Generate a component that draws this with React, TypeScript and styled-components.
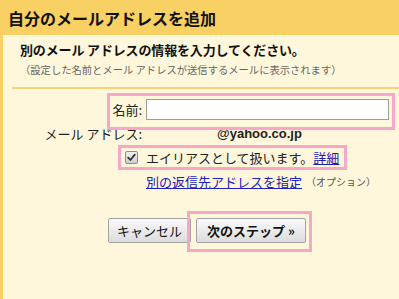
import * as React from "react";
import styled, { createGlobalStyle } from "styled-components";

const GlobalStyle = createGlobalStyle`
  html, body {
    margin: 0;
    padding: 0;
    background: #fff7dc;
  }
  body {
    font-family: "Noto Sans CJK JP", "Liberation Sans", sans-serif;
    color: #222;
  }
`;

interface THighlight {
  left: number;
  top: number;
  width: number;
  height: number;
}

const highlights: THighlight[] = [
  { left: 107, top: 93, width: 288, height: 37 },
  { left: 118, top: 145, width: 229, height: 25 },
  { left: 187, top: 211, width: 125, height: 41 },
];

const CheckMark = () => (
  <svg width="9" height="9" viewBox="0 0 9 9">
    <path d="M1.2 4.6 L3.4 7 L7.8 1.6" fill="none" stroke="#333" strokeWidth="1.8" strokeLinecap="round" strokeLinejoin="round" />
  </svg>
);

const App: React.FunctionComponent = () => {
  return (
    <Page>
      <GlobalStyle />
      <Header>自分のメールアドレスを追加</Header>
      <Body>
        <Intro>
          <Subtitle>別のメール アドレスの情報を入力してください。</Subtitle>
          <Note>（設定した名前とメール アドレスが送信するメールに表示されます）</Note>
        </Intro>
        <Divider />
        <Form>
          <Label>名前:</Label>
          <Value>
            <TextInput />
          </Value>
          <Label>メール アドレス:</Label>
          <Value>
            <Address>@yahoo.co.jp</Address>
          </Value>
          <Label>
            <FakeCheckbox>
              <CheckMark />
            </FakeCheckbox>
          </Label>
          <Value>
            エイリアスとして扱います。<Link>詳細</Link>
          </Value>
          <Label />
          <Value>
            <Link>別の返信先アドレスを指定</Link>
            <Small>（オプション）</Small>
          </Value>
        </Form>
        <Buttons>
          <Button>キャンセル</Button>
          <Button primary>次のステップ »</Button>
        </Buttons>
      </Body>
      {highlights.map((h, i) => (
        <Highlight key={i} style={{ left: h.left, top: h.top, width: h.width, height: h.height }} />
      ))}
    </Page>
  );
};

const Page = styled.div`
  position: relative;
  width: 399px;
  height: 299px;
  overflow: hidden;
  background: #fff7dc;
`;

const Header = styled.div`
  height: 35px;
  display: flex;
  align-items: center;
  padding-left: 8px;
  background: #f9d064;
  font-size: 16px;
  font-weight: bold;
  color: #111;
`;

const Body = styled.div`
  border-left: 3px solid #f9d064;
  padding: 7px 0 0 9px;
  height: 257px;
`;

const Intro = styled.div`
  padding-left: 8px;
`;

const Subtitle = styled.div`
  font-size: 13px;
  line-height: 16px;
  font-weight: bold;
  color: #111;
  letter-spacing: -0.15px;
`;

const Note = styled.div`
  margin-top: 5px;
  font-size: 10.3px;
  line-height: 14px;
  color: #666;
`;

const Divider = styled.div`
  margin-top: 10px;
  height: 2px;
  background: #f3d27a;
`;

const Form = styled.div`
  display: grid;
  grid-template-columns: 130px 1fr;
  grid-auto-rows: 24px;
  column-gap: 4px;
  margin-top: 8px;
  font-size: 13px;
`;

const Label = styled.div`
  display: flex;
  align-items: center;
  justify-content: flex-end;
`;

const Value = styled.div`
  display: flex;
  align-items: center;
  white-space: nowrap;
`;

const TextInput = styled.div`
  width: 241px;
  height: 19px;
  border: 1px solid #a29d92;
  background: #fff;
`;

const Address = styled.span`
  margin-left: 71px;
  font-family: "Liberation Sans", Arial, sans-serif;
  font-weight: bold;
  font-size: 13px;
`;

const FakeCheckbox = styled.span`
  display: inline-flex;
  align-items: center;
  justify-content: center;
  width: 11px;
  height: 11px;
  margin-right: 4px;
  border: 1px solid #8e8e8e;
  border-radius: 2px;
  background: linear-gradient(#f0f0f0, #cfcfcf);
`;

const Link = styled.span`
  color: #2020b8;
  text-decoration: underline;
`;

const Small = styled.span`
  margin-left: 4px;
  font-size: 10px;
  color: #555;
`;

const Buttons = styled.div`
  display: flex;
  gap: 5px;
  margin-top: 25px;
  padding-left: 96px;
`;

const Button = styled.div<{ primary?: boolean }>`
  height: 23px;
  display: flex;
  align-items: center;
  padding: 0 ${(p) => (p.primary ? "10px" : "8px")};
  border: 1px solid #a3a3a3;
  border-radius: 2px;
  background: linear-gradient(#fafafa, #dcdcdc);
  font-size: 13px;
  font-weight: ${(p) => (p.primary ? "bold" : "normal")};
  color: #111;
`;

const Highlight = styled.div`
  position: absolute;
  box-sizing: border-box;
  border: 3px solid #f6a9c6;
  pointer-events: none;
`;

export default App;
